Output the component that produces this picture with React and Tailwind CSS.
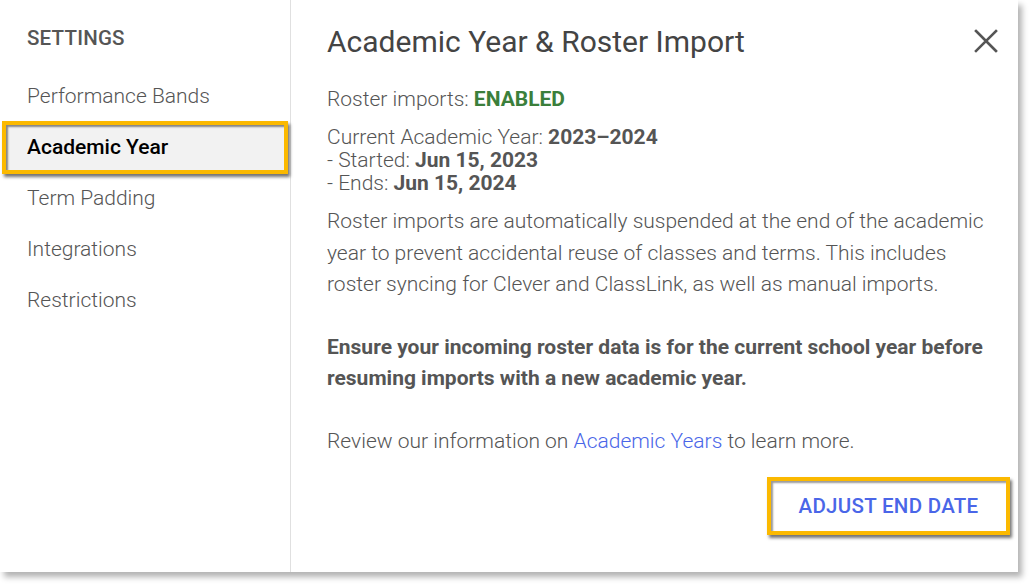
import React from "react";

const menu = ["Performance Bands", "Academic Year", "Term Padding", "Integrations", "Restrictions"];

function CloseIcon() {
  return (
    <svg width="24" height="24" viewBox="0 0 24 24" className="text-[#555]">
      <path d="M2 2 L22 22 M22 2 L2 22" stroke="currentColor" strokeWidth="2.6" strokeLinecap="square" />
    </svg>
  );
}

export default function App() {
  return (
    <div className="w-[1030px] h-[584px] bg-white" style={{ fontFamily: "Roboto, 'Liberation Sans', sans-serif" }}>
      <div className="w-[1018px] h-[572px] bg-white flex shadow-[4px_5px_6px_rgba(0,0,0,0.3)]">
        {/* sidebar */}
        <aside className="w-[291px] shrink-0 border-r border-[#e0e0e0] pt-[26px]">
          <div className="pl-[27px] text-[20.5px] font-medium text-[#555] leading-[24px] tracking-[0.2px]">SETTINGS</div>
          <nav className="mt-[21px] flex flex-col">
            {menu.map((item) =>
              item === "Academic Year" ? (
                <div
                  key={item}
                  className="mx-[2px] h-[53px] border-[4px] border-[#fbb900] bg-[#f2f2f2] shadow-[2px_3px_3px_rgba(0,0,0,0.55),inset_2px_2px_2px_rgba(0,0,0,0.45)] flex items-center pl-[21px] text-[21px] font-medium text-black my-[-1px]"
                >
                  {item}
                </div>
              ) : (
                <div key={item} className="h-[51px] flex items-center pl-[27px] text-[21px] font-light text-[#555]">
                  {item}
                </div>
              )
            )}
          </nav>
        </aside>

        {/* main */}
        <main className="flex-1 pl-[36px] pr-[21px] pt-[22px] text-[#555] font-light">
          <div className="flex items-start justify-between">
            <h1 className="text-[30px] font-normal text-[#444] leading-[40px]">Academic Year &amp; Roster Import</h1>
            <button className="mt-[7px] mr-[-1px]">
              <CloseIcon />
            </button>
          </div>

          <p className="mt-[24px] text-[21px] leading-[26px]">
            Roster imports: <span className="font-bold text-[#3b7f3b]">ENABLED</span>
          </p>

          <div className="mt-[14px] text-[21px] leading-[23px]">
            <div>
              Current Academic Year: <span className="font-bold text-[#555]">2023–2024</span>
            </div>
            <div>
              - Started: <span className="font-bold">Jun 15, 2023</span>
            </div>
            <div>
              - Ends: <span className="font-bold">Jun 15, 2024</span>
            </div>
          </div>

          <p className="mt-[11px] text-[21px] leading-[31.5px]">
            Roster imports are automatically suspended at the end of the academic year to prevent accidental reuse of classes and terms. This includes roster syncing for Clever and ClassLink, as well as manual imports.
          </p>

          <p className="mt-[31px] text-[21px] leading-[31.5px] font-bold">
            Ensure your incoming roster data is for the current school year before resuming imports with a new academic year.
          </p>

          <p className="mt-[31px] text-[21px] leading-[31.5px]">
            Review our information on <a className="text-[#4a66e8]">Academic Years</a> to learn more.
          </p>

          <div className="mt-[20px] flex justify-end mr-[-13px]">
            <button className="w-[243px] h-[58px] border-[4px] border-[#fbb900] bg-white shadow-[2px_3px_3px_rgba(0,0,0,0.55),inset_2px_2px_2px_rgba(0,0,0,0.4)] text-[20.5px] font-medium text-[#4a66e8] tracking-[0.3px]">
              ADJUST END DATE
            </button>
          </div>
        </main>
      </div>
    </div>
  );
}
